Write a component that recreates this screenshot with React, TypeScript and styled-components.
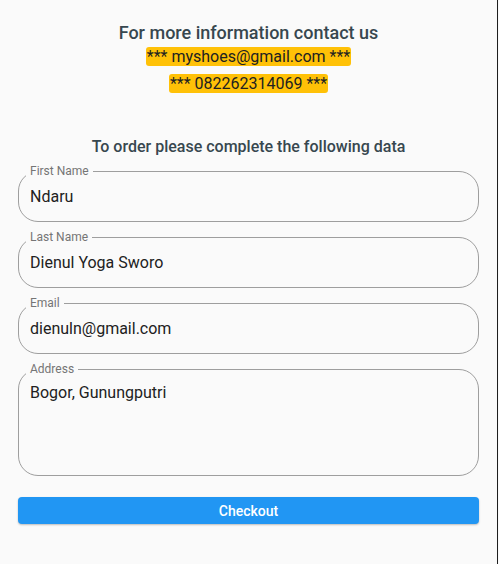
import styled, { createGlobalStyle } from "styled-components";

const GlobalStyle = createGlobalStyle`
  html, body {
    margin: 0;
    padding: 0;
    background: #fafafa;
  }
  body {
    font-family: Roboto, "Liberation Sans", sans-serif;
  }
`;

const Page = styled.div`
  width: 498px;
  min-height: 564px;
  box-sizing: border-box;
  border-right: 1px solid #1e1e1e;
  background: #fafafa;
  padding: 21px 18px 0;
  display: flex;
  flex-direction: column;
`;

const Contact = styled.div`
  display: flex;
  flex-direction: column;
  align-items: center;
`;

const Heading = styled.h1`
  margin: 0;
  font-size: 18px;
  line-height: 24px;
  font-weight: 500;
  color: #37474f;
`;

const Chip = styled.span<{ $gap: number }>`
  margin-top: ${(p) => p.$gap}px;
  background: #ffc107;
  color: #212121;
  font-size: 16px;
  line-height: 19px;
  padding: 0 1px;
  border-radius: 3px;
`;

const SubHeading = styled.h2`
  margin: 44px 0 8px;
  text-align: center;
  font-size: 16px;
  line-height: 20px;
  font-weight: 500;
  color: #37474f;
`;

const Form = styled.form`
  display: flex;
  flex-direction: column;
  gap: 9px;
`;

const Field = styled.fieldset`
  margin: 0;
  padding: 0 11px 6px;
  border: 1px solid #9e9e9e;
  border-radius: 20px;
  min-width: 0;
`;

const Legend = styled.legend`
  margin-left: -4px;
  padding: 0 4px;
  font-size: 12px;
  line-height: 12px;
  color: #757575;
`;

const Input = styled.input`
  display: block;
  width: 100%;
  box-sizing: border-box;
  height: 38px;
  padding: 9px 0 9px;
  border: none;
  outline: none;
  background: transparent;
  font-family: inherit;
  font-size: 16px;
  line-height: 20px;
  color: #212121;
`;

const Area = styled.textarea`
  display: block;
  width: 100%;
  box-sizing: border-box;
  height: 94px;
  padding: 8px 0 0;
  border: none;
  outline: none;
  resize: none;
  background: transparent;
  font-family: inherit;
  font-size: 16px;
  line-height: 20px;
  color: #212121;
`;

const Button = styled.button`
  margin-top: 21px;
  height: 27px;
  border: none;
  border-radius: 4px;
  background: #2196f3;
  color: #fff;
  font-family: inherit;
  font-size: 14px;
  font-weight: 500;
  box-shadow: 0 1px 2px rgba(0, 0, 0, 0.25);
  cursor: pointer;
`;

const fields = [
  { label: "First Name", value: "Ndaru" },
  { label: "Last Name", value: "Dienul Yoga Sworo" },
  { label: "Email", value: "dienuln@gmail.com" },
];

export default function App() {
  return (
    <>
      <GlobalStyle />
      <Page>
        <Contact>
          <Heading>For more information contact us</Heading>
          <Chip $gap={2}>*** myshoes@gmail.com ***</Chip>
          <Chip $gap={8}>*** 082262314069 ***</Chip>
        </Contact>
        <SubHeading>To order please complete the following data</SubHeading>
        <Form onSubmit={(e) => e.preventDefault()}>
          {fields.map((f) => (
            <Field key={f.label}>
              <Legend>{f.label}</Legend>
              <Input defaultValue={f.value} />
            </Field>
          ))}
          <Field>
            <Legend>Address</Legend>
            <Area defaultValue="Bogor, Gunungputri" />
          </Field>
        </Form>
        <Button>Checkout</Button>
      </Page>
    </>
  );
}
